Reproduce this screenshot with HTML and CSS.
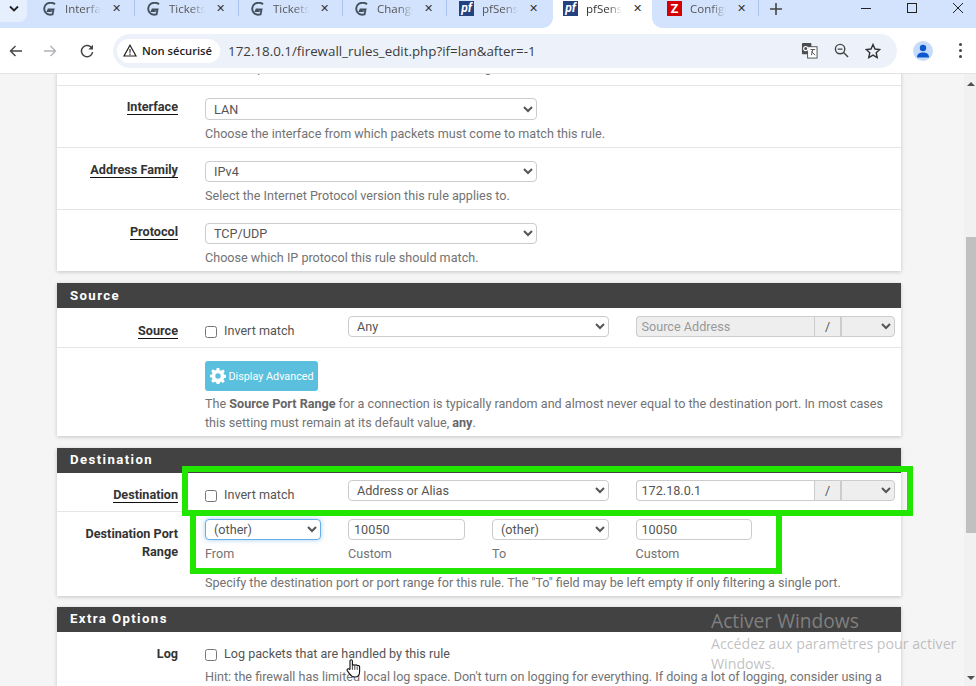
FILE: index.html
```html
<!DOCTYPE html>
<html lang="fr">
<head>
    <meta charset="UTF-8">
    <meta name="viewport" content="width=device-width, initial-scale=1.0">
    <title>pfSense - Firewall rule</title>
    <link rel="stylesheet" href="styles.css">
</head>
<body>
    <!-- Browser tabs -->
    <div class="tabstrip">
        <div class="tab-menu">
            <svg width="12" height="8" viewBox="0 0 12 8"><path d="M2 1.500 6 5.500 10 1.500" fill="none" stroke="#222" stroke-width="1.800"/></svg>
        </div>
        <div class="tab sep">
            <svg class="fav" viewBox="0 0 14 14"><path d="M12 2.200C10 .4 6 .2 3.500 2 .8 4 .6 8 2.500 10.500 4 12.500 7 13 9.500 12.400L10.500 7.500 5.500 7.500 4.800 9 8.600 9.100" fill="none" stroke="#44505c" stroke-width="1.900"/></svg>
            <span class="tab-title">Interface</span><span class="tab-x">✕</span>
        </div>
        <div class="tab sep">
            <svg class="fav" viewBox="0 0 14 14"><path d="M12 2.200C10 .4 6 .2 3.500 2 .8 4 .6 8 2.500 10.500 4 12.500 7 13 9.500 12.400L10.500 7.500 5.500 7.500 4.800 9 8.600 9.100" fill="none" stroke="#44505c" stroke-width="1.900"/></svg>
            <span class="tab-title">Tickets</span><span class="tab-x">✕</span>
        </div>
        <div class="tab sep">
            <svg class="fav" viewBox="0 0 14 14"><path d="M12 2.200C10 .4 6 .2 3.500 2 .8 4 .6 8 2.500 10.500 4 12.500 7 13 9.500 12.400L10.500 7.500 5.500 7.500 4.800 9 8.600 9.100" fill="none" stroke="#44505c" stroke-width="1.900"/></svg>
            <span class="tab-title">Tickets</span><span class="tab-x">✕</span>
        </div>
        <div class="tab sep">
            <svg class="fav" viewBox="0 0 14 14"><path d="M12 2.200C10 .4 6 .2 3.500 2 .8 4 .6 8 2.500 10.500 4 12.500 7 13 9.500 12.400L10.500 7.500 5.500 7.500 4.800 9 8.600 9.100" fill="none" stroke="#44505c" stroke-width="1.900"/></svg>
            <span class="tab-title">Changes</span><span class="tab-x">✕</span>
        </div>
        <div class="tab">
            <span class="fav-pf">pf</span>
            <span class="tab-title">pfSense</span><span class="tab-x">✕</span>
        </div>
        <div class="tab active">
            <span class="fav-pf">pf</span>
            <span class="tab-title">pfSense</span><span class="tab-x">✕</span>
        </div>
        <div class="tab sep">
            <span class="fav-z">Z</span>
            <span class="tab-title">Configuration</span><span class="tab-x">✕</span>
        </div>
        <svg class="tab-plus" width="12" height="12" viewBox="0 0 12 12"><path d="M6 0V12M0 6H12" stroke="#444" stroke-width="1.600"/></svg>
        <div class="win-controls">
            <svg width="12" height="12" viewBox="0 0 12 12"><path d="M1 6.500H11" stroke="#222" stroke-width="1"/></svg>
            <svg width="12" height="12" viewBox="0 0 12 12"><rect x="1.500" y="1.500" width="9" height="9" fill="none" stroke="#222"/></svg>
            <svg width="12" height="12" viewBox="0 0 12 12"><path d="M1 1 11 11M11 1 1 11" stroke="#222"/></svg>
        </div>
    </div>

    <!-- Address bar -->
    <div class="toolbar">
        <svg class="nav-btn back" width="13" height="12" viewBox="0 0 13 12"><path d="M13 6H1.500M6.500 1 1.500 6l5 5" fill="none" stroke="#444" stroke-width="1.400"/></svg>
        <svg class="nav-btn forward" width="13" height="12" viewBox="0 0 13 12"><path d="M0 6H11.500M6.500 1l5 5-5 5" fill="none" stroke="#b0b3b8" stroke-width="1.400"/></svg>
        <svg class="nav-btn reload" width="14" height="14" viewBox="0 0 14 14"><path d="M12 4.500A5.600 5.600 0 1 0 12.600 8" fill="none" stroke="#444" stroke-width="1.500"/><path d="M13 .8V5.500H8.300z" fill="#444"/></svg>
        <div class="omnibox">
            <div class="chip">
                <svg width="14" height="13" viewBox="0 0 14 13"><path d="M7 1.200 13 12H1z" fill="none" stroke="#222" stroke-width="1.200"/><path d="M7 5V8.800M7 9.600V11" stroke="#222" stroke-width="1.100"/></svg>
                <span>Non sécurisé</span>
            </div>
            <span class="url">172.18.0.1/firewall_rules_edit.php?if=lan&amp;after=-1</span>
            <svg class="omni-icon" width="17" height="17" viewBox="0 0 18 18"><rect x="1" y="1" width="10" height="12" rx="1" fill="#4a4d52"/><rect x="7" y="5" width="10" height="12" fill="#fff" stroke="#4a4d52"/><circle cx="5" cy="7" r="2.200" fill="none" stroke="#fff" stroke-width="1.200"/><path d="M10 8H15M12.500 8 11 14M11 10 15 14" fill="none" stroke="#4a4d52"/></svg>
            <svg class="omni-icon" width="15" height="15" viewBox="0 0 16 16"><circle cx="6.500" cy="6.500" r="5" fill="none" stroke="#444" stroke-width="1.500"/><path d="M4 6.500H9M10.200 10.200 15 15" stroke="#444" stroke-width="1.500"/></svg>
            <svg class="omni-icon" width="16" height="16" viewBox="0 0 16 16"><path d="M8 1.500 10 6l4.800.5-3.600 3.200 1 4.800L8 12.100 3.800 14.500l1-4.800L1.200 6.500 6 6z" fill="none" stroke="#333" stroke-width="1.400"/></svg>
        </div>
        <div class="avatar">
            <svg width="14" height="14" viewBox="0 0 14 14"><circle cx="7" cy="4" r="3.200" fill="#0b57d0"/><path d="M1 13.500C1 9.800 4 8.600 7 8.600s6 1.200 6 4.900z" fill="#0b57d0"/></svg>
        </div>
        <div class="kebab"><i></i><i></i><i></i></div>
    </div>

    <div class="page">
        <main class="content">
            <!-- Edit rule panel, scrolled part -->
            <section class="panel first">
                <div class="row clipped">
                    <p class="hint col-full">Set this option to disable this rule without removing it from the list.</p>
                </div>
                <div class="row iface-row">
                    <label class="row-label"><span class="u">Interface</span></label>
                    <div class="col-full">
                        <select class="sel-wide tall"><option>LAN</option></select>
                        <p class="hint">Choose the interface from which packets must come to match this rule.</p>
                    </div>
                </div>
                <div class="row">
                    <label class="row-label"><span class="u">Address Family</span></label>
                    <div class="col-full">
                        <select class="sel-wide"><option>IPv4</option></select>
                        <p class="hint">Select the Internet Protocol version this rule applies to.</p>
                    </div>
                </div>
                <div class="row last">
                    <label class="row-label"><span class="u">Protocol</span></label>
                    <div class="col-full">
                        <select class="sel-wide"><option>TCP/UDP</option></select>
                        <p class="hint">Choose which IP protocol this rule should match.</p>
                    </div>
                </div>
            </section>

            <section class="panel">
                <h2 class="panel-title">Source</h2>
                <div class="row match-row">
                    <label class="row-label"><span class="u">Source</span></label>
                    <label class="check"><input type="checkbox"> Invert match</label>
                    <select class="span-2"><option>Any</option></select>
                    <div class="addr-group">
                        <input type="text" placeholder="Source Address" disabled>
                        <span class="addon">/</span>
                        <select disabled><option></option></select>
                    </div>
                </div>
                <div class="row last adv-row">
                    <div class="col-full">
                        <button class="btn-info">
                            <svg width="16" height="16" viewBox="0 0 16 16"><path fill="#fff" fill-rule="evenodd" d="M6.700 0h2.600l.4 2.200 1.400.6 1.900-1.300 1.800 1.800-1.300 1.900.6 1.400 2.200.4v2.600l-2.200.4-.6 1.400 1.300 1.900-1.800 1.800-1.900-1.300-1.400.6-.4 2.200H6.700l-.4-2.200-1.400-.6L3 14.700l-1.800-1.800 1.300-1.900-.6-1.400L-.3 9.200V6.800l2.200-.4.6-1.400L1.200 3.100 3 1.300l1.900 1.300 1.400-.6zM8 5.300a2.700 2.700 0 1 0 0 5.400 2.700 2.700 0 0 0 0-5.400z"/></svg>
                            Display Advanced
                        </button>
                        <p class="hint multi">The <b>Source Port Range</b> for a connection is typically random and almost never equal to the destination port. In most cases this setting must remain at its default value, <b>any</b>.</p>
                    </div>
                </div>
            </section>

            <section class="panel">
                <h2 class="panel-title raised">Destination</h2>
                <div class="row match-row dest-row">
                    <label class="row-label"><span class="u">Destination</span></label>
                    <label class="check"><input type="checkbox"> Invert match</label>
                    <select class="span-2"><option>Address or Alias</option></select>
                    <div class="addr-group">
                        <input type="text" value="172.18.0.1">
                        <span class="addon">/</span>
                        <select disabled><option></option></select>
                    </div>
                </div>
                <div class="row last port-row">
                    <label class="row-label two-line">Destination Port Range</label>
                    <div class="port-col">
                        <select class="focused"><option>(other)</option></select>
                        <span class="hint">From</span>
                    </div>
                    <div class="port-col">
                        <input type="text" value="10050">
                        <span class="hint">Custom</span>
                    </div>
                    <div class="port-col">
                        <select><option>(other)</option></select>
                        <span class="hint">To</span>
                    </div>
                    <div class="port-col">
                        <input type="text" class="port-input" value="10050">
                        <span class="hint">Custom</span>
                    </div>
                    <p class="hint col-full port-hint">Specify the destination port or port range for this rule. The "To" field may be left empty if only filtering a single port.</p>
                </div>
            </section>

            <section class="panel extra">
                <h2 class="panel-title raised">Extra Options</h2>
                <div class="row log-row">
                    <label class="row-label plain">Log</label>
                    <div class="col-full">
                        <label class="check"><input type="checkbox"> Log packets that are handled by this rule</label>
                        <p class="hint multi">Hint: the firewall has limited local log space. Don't turn on logging for everything. If doing a lot of logging, consider using a remote syslog server (see the Status: System Logs: Settings page).</p>
                    </div>
                </div>
            </section>
        </main>

        <div class="scrollbar">
            <span class="arrow up"></span>
            <div class="thumb"></div>
            <span class="arrow down"></span>
        </div>

        <!-- Green annotation boxes drawn over the form -->
        <div class="mark mark-dest"></div>
        <div class="mark mark-port"></div>

        <svg class="cursor" width="16" height="22" viewBox="0 0 20 26"><path d="M5 13V3c0-2 3-2 3 0v6c0-1.500 3-1.500 3 0 0-1.500 3-1.500 3 .3 0-1 3-1 3 .7v6c0 4-2 7-6 7-3.500 0-5-1.500-6.500-4L1.500 15c-1-1.800 1.500-3.200 3-1.500z" fill="#fff" stroke="#111" stroke-width="1.400"/><path d="M8 9v5M11 9.300V14M14 9.800V14" stroke="#111"/></svg>

        <div class="watermark">
            <div class="wm-title">Activer Windows</div>
            <div class="wm-text">Accédez aux paramètres pour activer<br>Windows.</div>
        </div>
    </div>
</body>
</html>
```

FILE: styles.css
```css
* {
    box-sizing: border-box;
}

body {
    margin: 0;
    width: 976px;
    height: 686px;
    overflow: hidden;
    font-family: Roboto, "Liberation Sans", sans-serif;
    font-size: 12.600px;
    color: #333;
    background: #f5f5f5;
}

/* Browser tabs */
.tabstrip {
    display: flex;
    height: 28px;
    background: #d3e3fd;
}

.tab-menu {
    display: flex;
    align-items: center;
    justify-content: center;
    width: 27px;
    height: 22px;
    margin-right: 4px;
    padding-bottom: 5px;
    background: #e6effd;
    border-radius: 0 0 8px 0;
}

.tab {
    position: relative;
    display: flex;
    align-items: center;
    width: 104px;
    height: 28px;
    padding: 0 0 11px 12px;
}

.tab.sep::after {
    content: "";
    position: absolute;
    right: 0;
    top: 0;
    width: 1px;
    height: 16px;
    background: #a9c4ec;
}

/* White tab with flared bottom corners */
.tab.active {
    width: 99px;
    margin: 0 3px 0 2px;
    padding-left: 10px;
    background: #fff;
}

.tab.active::before,
.tab.active::after {
    content: "";
    position: absolute;
    bottom: 0;
    width: 10px;
    height: 10px;
}

.tab.active::before {
    left: -10px;
    background: radial-gradient(circle at 0 0, #d3e3fd 9.500px, #fff 10px);
}

.tab.active::after {
    right: -10px;
    background: radial-gradient(circle at 100% 0, #d3e3fd 9.500px, #fff 10px);
}

.fav {
    flex: none;
    width: 14px;
    height: 14px;
}

.fav-pf,
.fav-z {
    flex: none;
    width: 15px;
    height: 15px;
    line-height: 15px;
    text-align: center;
    color: #fff;
    font-weight: bold;
}

.fav-pf {
    background: #23407f;
    font-size: 12px;
    font-style: italic;
}

.fav-z {
    background: #d40000;
    font-size: 13px;
}

.tab-title {
    width: 36px;
    margin-left: 8px;
    overflow: hidden;
    white-space: nowrap;
    font-family: "Open Sans", sans-serif;
    font-size: 11.500px;
    color: #555;
    -webkit-mask-image: linear-gradient(to right, #000 60%, transparent);
    mask-image: linear-gradient(to right, #000 60%, transparent);
}

.active .tab-title {
    color: #333;
}

.tab-x {
    margin-left: 11px;
    font-size: 11px;
    color: #333;
}

.tab-plus {
    margin: 3px 0 0 11px;
}

.win-controls {
    display: flex;
    gap: 34px;
    margin: 2px 12px 0 auto;
}

/* Address bar */
.toolbar {
    display: flex;
    align-items: center;
    height: 46px;
    padding: 5px 0;
    background: #fff;
    border-bottom: 1px solid #e3e3e3;
}

.nav-btn {
    flex: none;
}

.nav-btn.back {
    margin: 0 22px 0 9px;
}

.nav-btn.forward {
    margin-right: 23px;
}

.nav-btn.reload {
    margin-right: 19px;
}

.omnibox {
    display: flex;
    align-items: center;
    width: 784px;
    height: 34px;
    padding-left: 4px;
    background: #edf2fa;
    border-radius: 17px;
}

.chip {
    display: flex;
    align-items: center;
    gap: 5px;
    height: 24px;
    padding: 0 8px 0 6px;
    background: #fff;
    border-radius: 12px;
    font-family: "Open Sans", sans-serif;
    font-size: 11.200px;
    font-weight: 600;
    color: #222;
}

.url {
    margin-left: 8px;
    margin-right: auto;
    font-family: "Open Sans", sans-serif;
    font-size: 13.350px;
    color: #3c3c3c;
}

.omni-icon {
    margin-right: 16px;
}

.avatar {
    display: flex;
    align-items: center;
    justify-content: center;
    width: 20px;
    height: 20px;
    margin-left: 16px;
    background: #c6dbf9;
    border-radius: 50%;
}

.kebab {
    display: flex;
    flex-direction: column;
    gap: 3px;
    margin-left: 26px;
}

.kebab i {
    width: 3px;
    height: 3px;
    background: #444;
    border-radius: 50%;
}

/* Page */
.page {
    position: relative;
    display: flex;
    height: 612px;
    overflow: hidden;
}

.content {
    flex: 1;
    padding: 0 63px 0 57px;
    overflow: hidden;
}

.panel {
    margin-top: 12px;
    background: #fff;
    box-shadow: 0 1px 4px rgba(0, 0, 0, 0.2);
}

.panel.first {
    margin-top: -12px;
}

.panel.extra {
    margin-top: 11px;
}

.panel-title {
    height: 25px;
    margin: 0;
    padding-left: 13px;
    background: #424242;
    color: #fff;
    font-size: 13.200px;
    font-weight: bold;
    line-height: 25px;
    letter-spacing: 1.400px;
}

.panel-title.raised {
    line-height: 23px;
}

/* Form rows: label, then four columns */
.row {
    display: grid;
    grid-template-columns: 121px 116px 117px 116.500px 1fr;
    column-gap: 27px;
    padding: 13px 6px 4px 0;
    border-bottom: 1px solid #e5e5e5;
}

.row.last {
    border-bottom: 0;
}

.row.clipped {
    padding: 0 6px 8px 0;
}

.row.clipped .hint {
    margin-top: -3px;
}

.row.iface-row {
    padding-top: 12px;
}

.col-full {
    grid-column: 2 / -1;
}

.row-label {
    text-align: right;
    font-size: 12.650px;
    font-weight: bold;
    line-height: 18px;
    color: #333;
}

.row-label .u {
    border-bottom: 1px solid #111;
}

.row-label.two-line {
    margin-top: 6px;
}

.hint {
    margin: 5px 0 0;
    font-size: 12.600px;
    line-height: 18px;
    color: #737373;
}

.hint.multi {
    margin-top: 3px;
    line-height: 19px;
}

.hint b {
    color: #666;
}

select,
input[type="text"] {
    width: 100%;
    height: 21px;
    padding: 0 4px;
    border: 1px solid #ccc;
    border-radius: 4px;
    background: #fff;
    font-family: Roboto, "Liberation Sans", sans-serif;
    font-size: 12.650px;
    color: #555;
    outline: none;
}

input[type="text"] {
    padding: 0 5px;
}

select.sel-wide {
    display: block;
    width: 332px;
}

select.tall {
    height: 22px;
}

select.focused {
    border-color: #66afe9;
    box-shadow: 0 0 5px rgba(102, 175, 233, 0.6);
}

input::placeholder {
    color: #999;
}

.check {
    display: flex;
    align-items: center;
    gap: 7px;
    font-size: 12.600px;
    line-height: 18px;
    color: #555;
}

.check input {
    width: 12px;
    height: 12px;
    margin: 1px 0 0;
    accent-color: #555;
}

/* Source / destination rows */
.match-row {
    padding: 8px 6px 7px 0;
}

.match-row .row-label {
    margin-top: 6px;
}

.match-row .check {
    align-self: start;
    margin-top: 6px;
}

.span-2 {
    grid-column: span 2;
}

.dest-row {
    padding: 7px 6px 7px 0;
}

.addr-group {
    display: flex;
    height: 21px;
}

.addr-group input[type="text"] {
    flex: 1;
    min-width: 0;
    border-radius: 4px 0 0 4px;
    border-right: 0;
}

.addr-group input:disabled,
.addr-group select {
    background-color: #eee;
}

.addr-group select {
    flex: none;
    width: 54px;
    border-radius: 0 4px 4px 0;
    opacity: 1;
}

.addon {
    width: 27px;
    border: 1px solid #ccc;
    background: #eee;
    line-height: 19px;
    text-align: center;
    color: #555;
}

.adv-row {
    padding: 13px 6px 4px 0;
}

.btn-info {
    display: flex;
    align-items: center;
    gap: 3px;
    width: 113px;
    height: 30px;
    padding: 0 0 0 4.500px;
    border: 0;
    border-radius: 3px;
    background: #5bc0de;
    color: #fff;
    font-family: Roboto, "Liberation Sans", sans-serif;
    font-size: 10.800px;
}

/* Port range */
.port-row {
    padding: 7px 6px 4px 0;
}

.port-col .hint {
    display: block;
}

.port-input {
    width: 116.500px !important;
}

.port-hint {
    margin-top: 11px;
}

.log-row {
    padding-top: 13px;
    border-bottom: 0;
}

.log-row .hint.multi {
    margin-top: 4px;
}

/* Scrollbar */
.scrollbar {
    position: relative;
    flex: none;
    display: flex;
    flex-direction: column;
    align-items: flex-end;
    width: 12px;
    background: #f1f1f1;
}

.thumb {
    width: 10px;
    height: 296px;
    margin-top: 163px;
    background: #c0c0c0;
}

.arrow {
    position: absolute;
    right: 1px;
    width: 0;
    height: 0;
    border-left: 4px solid transparent;
    border-right: 4px solid transparent;
}

.arrow.up {
    top: 8px;
    border-bottom: 4px solid #505050;
}

.arrow.down {
    bottom: 6px;
    border-top: 4px solid #505050;
}

/* Overlays */
.mark {
    position: absolute;
    border: 6px solid #22e600;
}

.mark-dest {
    left: 182px;
    top: 392px;
    width: 731px;
    height: 50px;
}

.mark-port {
    left: 190px;
    top: 436px;
    width: 592px;
    height: 64px;
    border-top: 0;
}

.cursor {
    position: absolute;
    left: 346px;
    top: 584px;
}

.watermark {
    position: absolute;
    left: 711px;
    top: 535px;
    font-family: "Open Sans", sans-serif;
    pointer-events: none;
}

.wm-title {
    font-size: 19.200px;
    line-height: 24px;
    color: rgba(140, 140, 140, 0.85);
}

.wm-text {
    margin-top: 1px;
    font-size: 14.200px;
    line-height: 20px;
    white-space: nowrap;
    color: rgba(140, 140, 140, 0.55);
}
```
